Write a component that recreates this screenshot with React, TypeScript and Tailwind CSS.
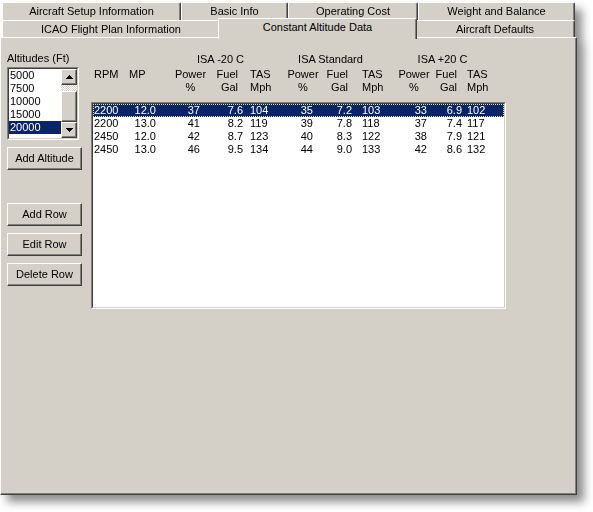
import React from "react";

const rows: string[][] = [
  ["2200", "12.0", "37", "7.6", "104", "35", "7.2", "103", "33", "6.9", "102"],
  ["2200", "13.0", "41", "8.2", "119", "39", "7.8", "118", "37", "7.4", "117"],
  ["2450", "12.0", "42", "8.7", "123", "40", "8.3", "122", "38", "7.9", "121"],
  ["2450", "13.0", "46", "9.5", "134", "44", "9.0", "133", "42", "8.6", "132"],
];

const dataCols = [
  "w-[40px] pl-[1px] text-left",
  "w-[23px] text-right",
  "w-[44px] text-right",
  "w-[43px] text-right",
  "w-[37px] pl-[7px] text-left",
  "w-[33px] text-right",
  "w-[39px] text-right",
  "w-[45px] pl-[10px] text-left",
  "w-[30px] text-right",
  "w-[35px] text-right",
  "flex-1 pl-[5px] text-left",
];

const altitudes = ["5000", "7500", "10000", "15000", "20000"];

function Raised({ className = "", children }: { className?: string; children?: React.ReactNode }) {
  return (
    <div
      className={
        "border border-t-white border-l-white border-r-[#404040] border-b-[#404040] shadow-[inset_-1px_-1px_0_#808080] bg-[#d4d0c8] " +
        className
      }
    >
      {children}
    </div>
  );
}

function Sunken({ className = "", innerClassName = "", children }: { className?: string; innerClassName?: string; children?: React.ReactNode }) {
  return (
    <div className={"border border-t-[#808080] border-l-[#808080] border-r-white border-b-white " + className}>
      <div className={"h-full w-full border border-t-[#404040] border-l-[#404040] border-r-[#d4d0c8] border-b-[#d4d0c8] bg-white " + innerClassName}>
        {children}
      </div>
    </div>
  );
}

function Button({ label }: { label: string }) {
  return (
    <Raised className="w-[75px] h-[23px] flex items-center justify-center leading-[13px]">
      <span>{label}</span>
    </Raised>
  );
}

function Arrow({ down }: { down?: boolean }) {
  return (
    <svg width="7" height="4" viewBox="0 0 7 4" shapeRendering="crispEdges">
      {down ? <polygon points="0,0 7,0 3.5,4" fill="#000" /> : <polygon points="3.5,0 7,4 0,4" fill="#000" />}
    </svg>
  );
}

function Tab({ label, w, top }: { label: string; w: string; top?: boolean }) {
  return (
    <div
      className={
        "shrink-0 bg-[#d4d0c8] border-t border-l border-r border-t-white border-l-white border-r-[#404040] rounded-tl-[2px] rounded-tr-[2px] shadow-[inset_-1px_0_0_#808080] flex justify-center pt-[2px] leading-[13px] " +
        (top ? "h-[18px] " : "h-[17px] ") +
        w
      }
    >
      <span>{label}</span>
    </div>
  );
}

export default function App() {
  return (
    <div className="w-[593px] h-[512px] bg-white font-['Liberation_Sans',Arial,sans-serif] text-[11px] text-black">
      <div className="w-[577px] flex flex-col pt-[2px] [filter:drop-shadow(7px_7px_5px_rgba(0,0,0,0.45))]">
        {/* Tab row 1 */}
        <div className="flex pl-[2px] h-[18px]">
          <Tab top label="Aircraft Setup Information" w="w-[179px]" />
          <Tab top label="Basic Info" w="w-[107px]" />
          <Tab top label="Operating Cost" w="w-[130px]" />
          <Tab top label="Weight and Balance" w="w-[157px]" />
        </div>
        {/* Tab row 2 */}
        <div className="flex pl-[2px] h-[17px] items-start">
          <Tab label="ICAO Flight Plan Information" w="w-[218px]" />
          <div className="relative z-10 shrink-0 -mx-[2px] -mt-[2px] w-[199px] h-[21px] bg-[#d4d0c8] border-t border-l border-r border-t-white border-l-white border-r-[#404040] rounded-tl-[2px] rounded-tr-[2px] shadow-[inset_-1px_0_0_#808080] flex justify-center pt-[2px] leading-[13px]">
            <span>Constant Altitude Data</span>
          </div>
          <Tab label="Aircraft Defaults" w="w-[160px]" />
        </div>
        {/* Panel */}
        <div className="w-[577px] h-[458px] bg-[#d4d0c8] border border-t-white border-l-white border-r-[#404040] border-b-[#404040] shadow-[inset_-1px_-1px_0_#808080] flex pl-[6px] pt-[14px]">
          {/* Left column */}
          <div className="w-[84px] shrink-0 flex flex-col">
            <div className="h-[13px] leading-[13px]">Altitudes (Ft)</div>
            <Sunken className="mt-[2px] w-[72px] h-[73px]" innerClassName="flex">
              <div className="w-[52px] flex flex-col">
                {altitudes.map((a) => (
                  <div
                    key={a}
                    className={
                      "h-[13px] leading-[13px] pl-[1px] " + (a === "20000" ? "bg-[#0a246a] text-white" : "")
                    }
                  >
                    {a}
                  </div>
                ))}
              </div>
              <div className="w-[16px] flex flex-col">
                <Raised className="h-[16px] flex items-center justify-center">
                  <Arrow />
                </Raised>
                <div className="h-[6px] [background-image:repeating-conic-gradient(#ffffff_0_25%,#d4d0c8_0_50%)] [background-size:2px_2px]" />
                <Raised className="h-[31px]" />
                <Raised className="h-[16px] flex items-center justify-center">
                  <Arrow down />
                </Raised>
              </div>
            </Sunken>
            <div className="mt-[7px]">
              <Button label="Add Altitude" />
            </div>
            <div className="mt-[33px] flex flex-col gap-[7px]">
              <Button label="Add Row" />
              <Button label="Edit Row" />
              <Button label="Delete Row" />
            </div>
          </div>
          {/* Right column */}
          <div className="flex flex-col mt-[1px]">
            <div className="flex h-[13px] leading-[13px]">
              <div className="ml-[79px] w-[101px] text-center">ISA -20 C</div>
              <div className="ml-[9px] w-[101px] text-center">ISA Standard</div>
              <div className="ml-[11px] w-[101px] text-center">ISA +20 C</div>
            </div>
            <div className="flex h-[13px] leading-[13px] mt-[2px]">
              <div className="w-[35px] pl-[3px]">RPM</div>
              <div className="w-[44px] pl-[3px]">MP</div>
              <div className="w-[41px] text-center">Power</div>
              <div className="w-[27px] text-right">Fuel</div>
              <div className="w-[46px] pl-[12px]">TAS</div>
              <div className="w-[38px] text-center">Power</div>
              <div className="w-[26px] text-right">Fuel</div>
              <div className="w-[46px] pl-[14px]">TAS</div>
              <div className="w-[40px] text-center">Power</div>
              <div className="w-[23px] text-right">Fuel</div>
              <div className="pl-[10px]">TAS</div>
            </div>
            <div className="flex h-[13px] leading-[13px]">
              <div className="w-[35px]" />
              <div className="w-[44px]" />
              <div className="w-[41px] text-center">%</div>
              <div className="w-[27px] text-right">Gal</div>
              <div className="w-[46px] pl-[12px]">Mph</div>
              <div className="w-[38px] text-center">%</div>
              <div className="w-[26px] text-right">Gal</div>
              <div className="w-[46px] pl-[14px]">Mph</div>
              <div className="w-[40px] text-center">%</div>
              <div className="w-[23px] text-right">Gal</div>
              <div className="pl-[10px]">Mph</div>
            </div>
            <Sunken className="mt-[8px] w-[415px] h-[207px]" innerClassName="flex flex-col">
              {rows.map((r, i) => (
                <div
                  key={i}
                  className={
                    "flex h-[13px] leading-[13px] " +
                    (i === 0
                      ? "bg-[#0a246a] text-white outline outline-1 outline-dotted outline-[#e8e870] -outline-offset-1"
                      : "")
                  }
                >
                  {r.map((v, j) => (
                    <div key={j} className={dataCols[j]}>
                      {v}
                    </div>
                  ))}
                </div>
              ))}
            </Sunken>
          </div>
        </div>
      </div>
    </div>
  );
}
